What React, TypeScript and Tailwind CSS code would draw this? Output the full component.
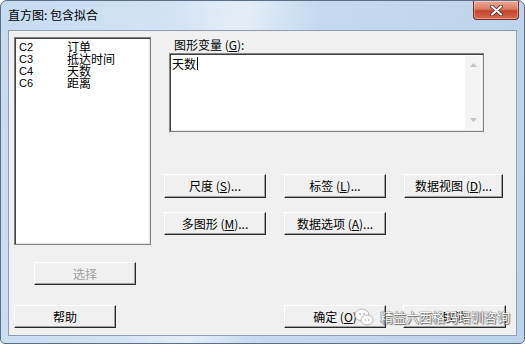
import { ReactNode } from 'react';

const cjk = "font-['SimSun','Noto_Sans_CJK_SC',sans-serif]";

// Classic raised push button
interface PushButtonProps {
  children: ReactNode;
  className?: string;
  disabled?: boolean;
}

function PushButton({ children, className = '', disabled = false }: PushButtonProps) {
  return (
    <div
      className={`flex items-center justify-center bg-[#f0f0f0] border border-t-white border-l-white border-r-[#2a2a2a] border-b-[#2a2a2a] shadow-[inset_-1px_-1px_0_#a0a0a0] text-[12px] leading-none ${disabled ? 'text-[#a0a0a0]' : 'text-black'} ${className}`}
    >
      {children}
    </div>
  );
}

// mnemonic letter
function Key({ k }: { k: string }) {
  return <span className="underline underline-offset-1">{k}</span>;
}

const columns = [
  { id: 'C2', name: '订单' },
  { id: 'C3', name: '抵达时间' },
  { id: 'C4', name: '天数' },
  { id: 'C6', name: '距离' },
];

export default function App() {
  return (
    <div className={`w-[525px] h-[344px] overflow-hidden bg-white ${cjk}`}>
      <div className="w-[525px] h-[344px] rounded-t-[7px] rounded-b-[5px] border border-[#5a6f86] bg-[linear-gradient(100deg,#c6daf0_0%,#d3e3f4_30%,#e4eef8_42%,#c4d9ef_55%,#bcd3ec_100%)] flex flex-col">
        {/* Title bar */}
        <div className="h-[29px] flex items-start justify-between shrink-0">
          <div className="pl-[7px] pt-[7px] text-[12px] leading-[14px] text-black">直方图: 包含拟合</div>
          <div className="mr-[5px] w-[46px] h-[19px] rounded-b-[4px] border border-t-0 border-[#7a2a1e] bg-[linear-gradient(180deg,#e9ab98_0%,#d97a62_45%,#c4442c_55%,#d46a4c_100%)] flex items-center justify-center shadow-[inset_0_0_0_1px_rgba(255,255,255,0.35)]">
            <svg width="13" height="11" viewBox="0 0 13 11">
              <path d="M2 1.5 L11 9.5 M11 1.5 L2 9.5" stroke="#4a1a12" strokeWidth="3.6" strokeLinecap="round" />
              <path d="M2 1.5 L11 9.5 M11 1.5 L2 9.5" stroke="#ffffff" strokeWidth="2.2" strokeLinecap="round" />
            </svg>
          </div>
        </div>

        {/* Client area */}
        <div className="mx-[7px] w-[509px] h-[306px] bg-[#f0f0f0] border border-[#8c9fb4] pt-[6px] px-[5px] relative">
          <div className="flex">
            {/* Left column */}
            <div className="w-[137px] flex flex-col">
              <div className="h-[208px] bg-white border border-[#828282] shadow-[inset_1px_1px_0_#404040,inset_-1px_-1px_0_#e3e3e3] pt-[3px] pl-[4px]">
                {columns.map((c) => (
                  <div key={c.id} className="flex h-[12px] leading-[12px] text-[12px] text-black">
                    <span className="w-[48px] font-['Liberation_Sans',sans-serif] text-[11px]">{c.id}</span>
                    <span>{c.name}</span>
                  </div>
                ))}
              </div>
              <PushButton disabled className="mt-[17px] ml-[20px] w-[102px] h-[23px]">选择</PushButton>
            </div>

            {/* Right column */}
            <div className="ml-[13px] flex flex-col">
              <div className="ml-[10px] h-[16px] leading-[16px] text-[12px] text-black">
                图形变量 (<Key k="G" />):
              </div>
              <div className="ml-[5px] w-[315px] h-[79px] bg-white border border-[#828282] shadow-[inset_1px_1px_0_#404040,inset_-1px_-1px_0_#e3e3e3] flex">
                <div className="flex-1 pl-[2px] pt-[3px] text-[12px] leading-[14px] text-black flex items-start">
                  天数<span className="ml-[1px] w-px h-[13px] bg-black" />
                </div>
                <div className="w-[16px] my-[2px] mr-[2px] bg-[#f4f4f4] flex flex-col items-center justify-between py-[7px]">
                  <svg width="7" height="4" viewBox="0 0 7 4"><path d="M0 4 L3.5 0 L7 4 Z" fill="#c4c4c4" /></svg>
                  <svg width="7" height="4" viewBox="0 0 7 4"><path d="M0 0 L3.5 4 L7 0 Z" fill="#c4c4c4" /></svg>
                </div>
              </div>

              <div className="mt-[42px] flex gap-[18px]">
                <PushButton className="w-[102px] h-[24px]">尺度 (<Key k="S" />)...</PushButton>
                <PushButton className="w-[102px] h-[24px]">标签 (<Key k="L" />)...</PushButton>
                <PushButton className="w-[99px] h-[24px]">数据视图 (<Key k="D" />)...</PushButton>
              </div>
              <div className="mt-[14px] flex gap-[18px]">
                <PushButton className="w-[102px] h-[23px]">多图形 (<Key k="M" />)...</PushButton>
                <PushButton className="w-[102px] h-[23px]">数据选项 (<Key k="A" />)...</PushButton>
              </div>
            </div>
          </div>

          {/* Bottom row */}
          <div className="mt-[20px] flex">
            <PushButton className="w-[102px] h-[23px]">帮助</PushButton>
            <PushButton className="ml-[168px] w-[102px] h-[23px]">确定 (<Key k="O" />)</PushButton>
            <PushButton className="ml-[17px] w-[103px] h-[23px]">取消</PushButton>
          </div>

          {/* Watermark */}
          <div className="absolute left-[345px] top-[276px] flex items-center gap-[6px] pointer-events-none whitespace-nowrap">
            <svg width="20" height="20" viewBox="0 0 20 20">
              <ellipse cx="8" cy="8" rx="7" ry="6" fill="#ffffff" stroke="#b8b8b8" strokeWidth="1" />
              <ellipse cx="13" cy="13" rx="6" ry="5" fill="#ffffff" stroke="#b8b8b8" strokeWidth="1" />
              <circle cx="6" cy="7" r="0.9" fill="#b0b0b0" />
              <circle cx="10" cy="7" r="0.9" fill="#b0b0b0" />
              <circle cx="11.5" cy="13" r="0.8" fill="#b0b0b0" />
              <circle cx="14.5" cy="13" r="0.8" fill="#b0b0b0" />
            </svg>
            <span className="text-[13px] leading-[18px] text-white [text-shadow:0_0_1px_#555,0_0_1px_#555,1px_1px_1px_#777]">
              精益六西格玛培训咨询
            </span>
          </div>
        </div>
      </div>
    </div>
  );
}
